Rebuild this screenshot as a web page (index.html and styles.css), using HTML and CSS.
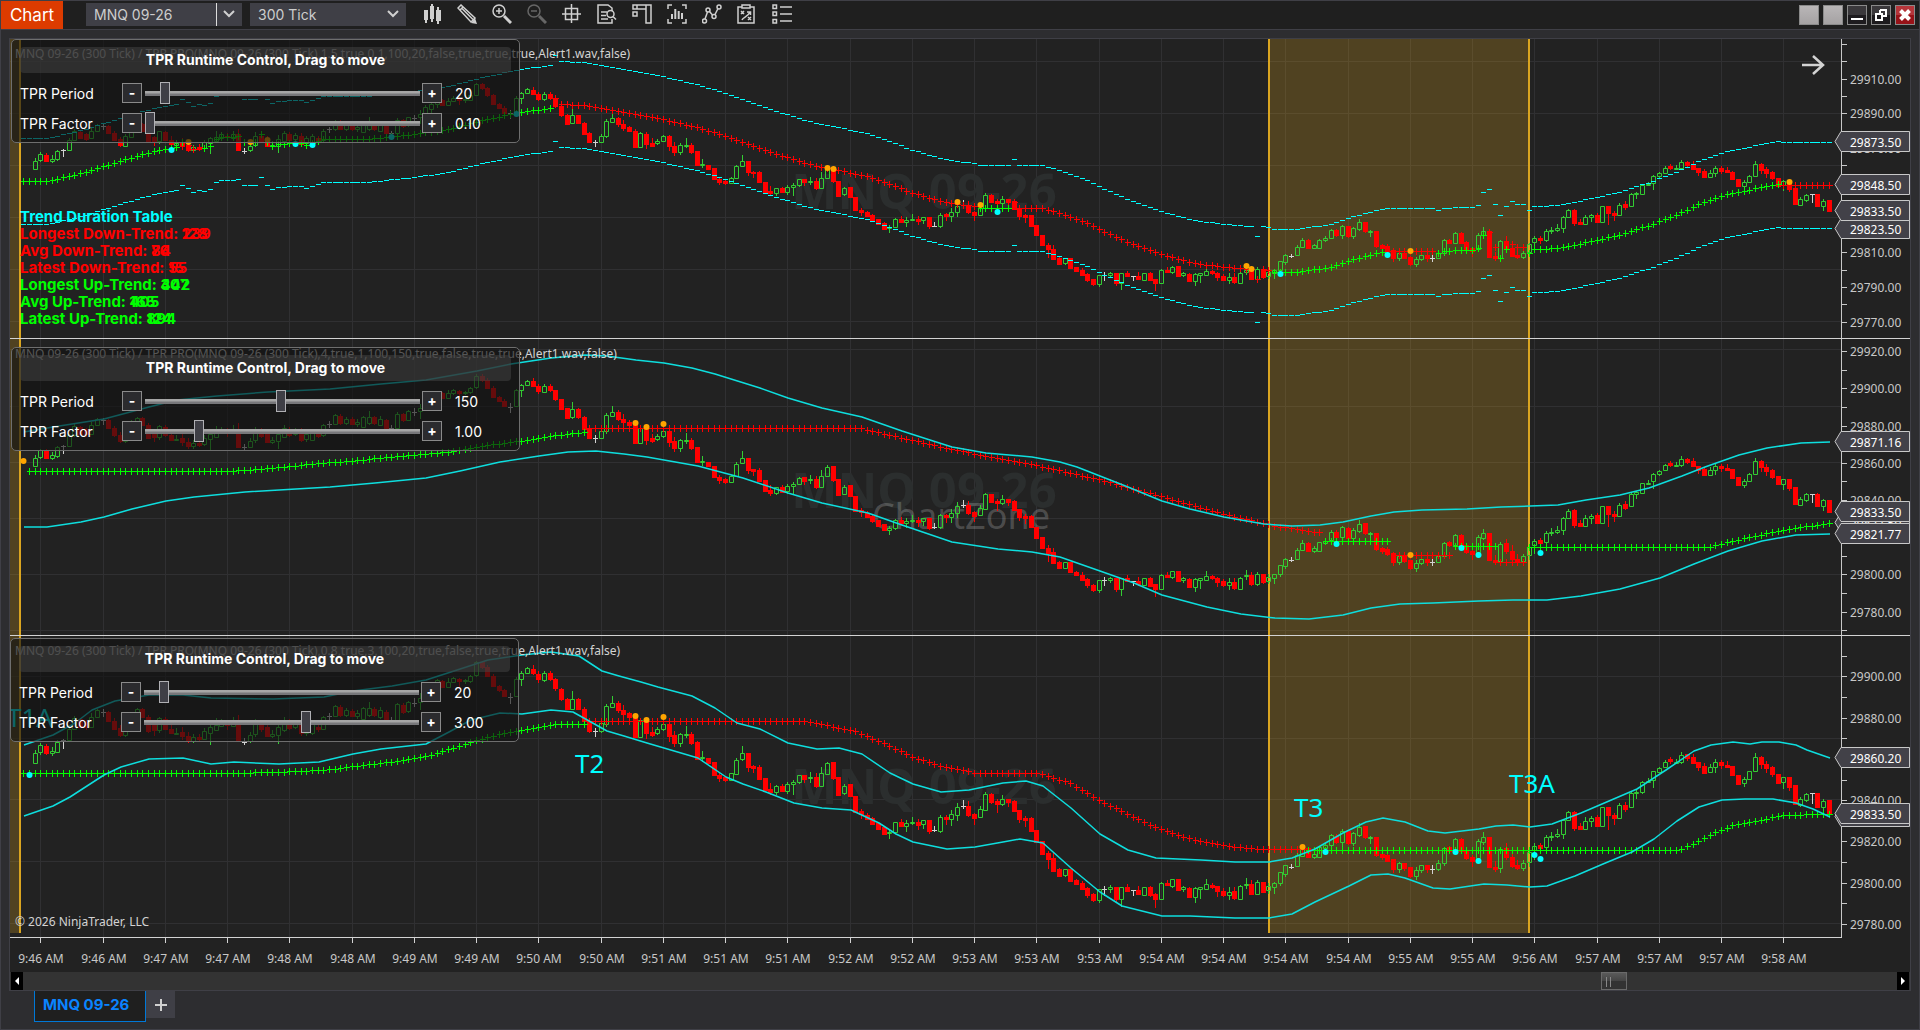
FILE: index.html
```html
<!DOCTYPE html>
<html lang="en">
<head>
    <meta charset="UTF-8">
    <meta name="viewport" content="width=device-width, initial-scale=1.0">
    <title>Chart - MNQ 09-26</title>
    <link rel="stylesheet" href="styles.css">
</head>
<body>

    <header class="titlebar">
        <h1 class="badge">Chart</h1>
        <div class="picker split">
            <select aria-label="Instrument"><option>MNQ 09-26</option></select>
            <svg class="chevron" viewBox="0 0 12 8"><path d="M1 1l5 5 5-5"/></svg>
        </div>
        <div class="picker">
            <select aria-label="Interval"><option>300 Tick</option></select>
            <svg class="chevron" viewBox="0 0 12 8"><path d="M1 1l5 5 5-5"/></svg>
        </div>
        <nav class="tools">
            <button aria-label="Chart style"><svg viewBox="0 0 20 20"><path class="solid" d="M2 6h4v10h-1v3h-2v-3H2zM8 2h1V0h2v2h1v13h-1v3h-2v-3H8zM14 6h1V3h2v3h2v11h-2v3h-2v-3h-1z"/></svg></button>
            <button aria-label="Drawing tools"><svg viewBox="0 0 20 20"><path class="solid" d="M14 19l6 1-2-6z"/><path d="M1 4l3-3 14 13-4 4zM3 6l3-3M5 4.500l11 11"/></svg></button>
            <button aria-label="Zoom in"><svg viewBox="0 0 20 20"><circle cx="7" cy="7" r="6"/><path d="M4 7h6M7 4v6"/><path class="thick" d="M12 12l7 7"/></svg></button>
            <button aria-label="Zoom out" disabled><svg viewBox="0 0 20 20"><circle cx="7" cy="7" r="6"/><path d="M4 7h6"/><path class="thick" d="M12 12l7 7"/></svg></button>
            <button aria-label="Crosshair"><svg viewBox="0 0 20 20"><path d="M3.500 4.500h12v11h-12zM9.500 0v19M0 10h19"/></svg></button>
            <button aria-label="Data box"><svg viewBox="0 0 20 20"><path d="M15 7V4l-4-3H1v18h14v-4M4 8h6M4 11.500h5M4 15h7"/><circle cx="13.500" cy="10" r="3.500"/><path d="M16 12.500l3 3"/></svg></button>
            <button aria-label="Chart trader"><svg viewBox="0 0 20 20"><path d="M1 1h4v4H1zM1 8h4v4H1zM5 1h14v18h-5V5H5M14 5V1"/></svg></button>
            <button aria-label="Indicators"><svg viewBox="0 0 20 20"><path d="M5 1H1v4M15 1h4v4M1 15v4h4M19 15v4h-4"/><path class="bars" d="M5 10v5M8.300 5v10M11.700 7v8M15 9v6"/></svg></button>
            <button aria-label="Strategies"><svg viewBox="0 0 20 20"><circle cx="2.500" cy="17" r="2"/><circle cx="6" cy="6" r="2"/><circle cx="12" cy="12.500" r="2"/><circle cx="17" cy="3" r="2"/><path d="M3 15l2.500-7M7.500 7.500l3 3.500M13 10.500l3-6"/></svg></button>
            <button aria-label="Strategy analyzer"><svg viewBox="0 0 20 20"><path d="M5 3H1v16h16V3h-4M5 1h8v3H5zM4 7l3 3M7 7l-3 3M11 13l3 3M14 13l-3 3M5 16c1-3 6-3 8-8M10 8h3.500v3"/></svg></button>
            <button aria-label="Properties"><svg viewBox="0 0 20 20"><path d="M1 1h3.500v3.500H1zM1 8h3.500v3.500H1zM1 15.500h3.500V19H1zM8 3h12M8 10h12M8 17h12"/></svg></button>
        </nav>
        <div class="window-buttons">
            <button class="blank" aria-label="Link instrument"></button>
            <button class="blank" aria-label="Link interval"></button>
            <button aria-label="Minimize"><svg viewBox="0 0 18 18"><path d="M3 13h12"/></svg></button>
            <button aria-label="Restore"><svg viewBox="0 0 18 18"><path d="M8 4h6v6h-3M4 8h6v6H4zM8 4v4"/></svg></button>
            <button class="close" aria-label="Close"><svg viewBox="0 0 18 18"><path class="cross" d="M4.500 4.500l9 9M13.500 4.500l-9 9"/></svg></button>
        </div>
    </header>

    <main class="chart">
        <section class="pane pane-a" id="paneA">
            <svg class="plot"></svg>
            <p class="indicator">MNQ 09-26 (300 Tick) / TPR PRO(MNQ 09-26 (300 Tick),1.5,true,0.1,100,20,false,true,true,true,Alert1.wav,false)</p>
            <div class="durations">
                <p class="head">Trend Duration Table</p>
                <p class="down">Longest Down-Trend: <span class="stack"><span>239</span><span>128</span></span></p>
                <p class="down">Avg Down-Trend: <span class="stack"><span>76</span><span>84</span></span></p>
                <p class="down">Latest Down-Trend: <span class="stack"><span>55</span><span>15</span></span></p>
                <p class="up">Longest Up-Trend: <span class="stack"><span>442</span><span>307</span></span></p>
                <p class="up">Avg Up-Trend: <span class="stack"><span>405</span><span>165</span></span></p>
                <p class="up">Latest Up-Trend: <span class="stack"><span>124</span><span>894</span></span></p>
            </div>
            <div class="control">
                <h2>TPR Runtime Control, Drag to move</h2>
                <div class="row">
                    <label for="periodA">TPR Period</label>
                    <button>-</button><input type="range" id="periodA" min="3" max="300" value="20"><button>+</button>
                    <output for="periodA">20</output>
                </div>
                <div class="row">
                    <label for="factorA">TPR Factor</label>
                    <button>-</button><input type="range" id="factorA" min="0.1" max="5" step="0.1" value="0.1"><button>+</button>
                    <output for="factorA">0.10</output>
                </div>
            </div>
        </section>

        <section class="pane pane-b" id="paneB">
            <svg class="plot"></svg>
            <p class="indicator">MNQ 09-26 (300 Tick) / TPR PRO(MNQ 09-26 (300 Tick),4,true,1,100,150,true,false,true,true,Alert1.wav,false)</p>
            <div class="control">
                <h2>TPR Runtime Control, Drag to move</h2>
                <div class="row">
                    <label for="periodB">TPR Period</label>
                    <button>-</button><input type="range" id="periodB" min="3" max="300" value="150"><button>+</button>
                    <output for="periodB">150</output>
                </div>
                <div class="row">
                    <label for="factorB">TPR Factor</label>
                    <button>-</button><input type="range" id="factorB" min="0.1" max="5" step="0.1" value="1"><button>+</button>
                    <output for="factorB">1.00</output>
                </div>
            </div>
        </section>

        <section class="pane pane-c" id="paneC">
            <svg class="plot"></svg>
            <p class="indicator">MNQ 09-26 (300 Tick) / TPR PRO(MNQ 09-26 (300 Tick),0.8,true,3,100,20,true,false,true,true,Alert1.wav,false)</p>
            <p class="copyright">© 2026 NinjaTrader, LLC</p>
            <div class="control">
                <h2>TPR Runtime Control, Drag to move</h2>
                <div class="row">
                    <label for="periodC">TPR Period</label>
                    <button>-</button><input type="range" id="periodC" min="3" max="300" value="20"><button>+</button>
                    <output for="periodC">20</output>
                </div>
                <div class="row">
                    <label for="factorC">TPR Factor</label>
                    <button>-</button><input type="range" id="factorC" min="0.1" max="5" step="0.1" value="3"><button>+</button>
                    <output for="factorC">3.00</output>
                </div>
            </div>
        </section>

        <svg class="times" id="times"></svg>

        <div class="scroll">
            <button aria-label="Scroll left"><svg viewBox="0 0 12 16"><path d="M8 4v8L4 8z"/></svg></button>
            <input type="range" aria-label="Chart position" min="0" max="1000" value="854">
            <button aria-label="Scroll right"><svg viewBox="0 0 12 16"><path d="M4 4v8l4-4z"/></svg></button>
        </div>
    </main>

    <footer class="tabs">
        <button class="tab">MNQ 09-26</button>
        <button class="add" aria-label="Add tab"><svg viewBox="0 0 12 12"><path d="M6 0v12M0 6h12"/></svg></button>
    </footer>

    <script src="script.js"></script>
</body>
</html>
```
FILE: styles.css
```css
* {
    box-sizing: border-box;
}
body {
    margin: 0;
    height: 100vh;
    display: flex;
    flex-direction: column;
    overflow: hidden;
    background: #2d2d30;
    border: 1px solid #3f3f46;
    font-family: Inter, "Noto Sans", sans-serif;
    font-size: 14px;
    color: #fff;
}
button, select, input {
    font: inherit;
    color: inherit;
    margin: 0;
    padding: 0;
}
h1, h2, p {
    margin: 0;
}
svg {
    display: block;
    fill: none;
    stroke: #d0d0d0;
}

/* title bar */
.titlebar {
    display: flex;
    align-items: center;
    height: 29px;
    flex: none;
    background: #1f1f1f;
    border-bottom: 1px solid #3f3f46;
    padding-right: 4px;
}
.badge {
    align-self: stretch;
    width: 62px;
    margin-right: 23px;
    background: #dd3b00;
    font-size: 17px;
    line-height: 28px;
    font-weight: 400;
    text-align: center;
}
.picker {
    display: grid;
    width: 156px;
    height: 23px;
    margin: 0 8px 2px 0;
    background: #3f3f46;
}
.picker select {
    grid-area: 1 / 1;
    appearance: none;
    border: 0;
    background: none;
    color: #cdcdcd;
    font-size: 14px;
    padding-left: 8px;
}
.chevron {
    grid-area: 1 / 1;
    justify-self: end;
    align-self: center;
    width: 12px;
    height: 8px;
    margin-right: 7px;
    stroke-width: 2;
    pointer-events: none;
}
.split select {
    border-right: 1px solid #ddd;
    margin-right: 25px;
}
.tools {
    display: flex;
    gap: 15px;
    margin: 0 0 2px 8px;
}
.tools button {
    width: 20px;
    height: 20px;
    border: 0;
    background: none;
}
.tools svg {
    width: 20px;
    height: 20px;
    stroke-width: 1.5;
}
.tools .solid {
    fill: #d0d0d0;
    stroke: none;
}
.tools .thick {
    stroke-width: 3;
}
.tools .bars {
    stroke-width: 2;
}
.tools button:disabled {
    opacity: 0.4;
}
.window-buttons {
    display: flex;
    gap: 4px;
    margin-left: auto;
}
.window-buttons button {
    width: 20px;
    height: 20px;
    border: 1px solid #8a8a8a;
    background: linear-gradient(#3a383b 50%, #1d1b1e 50%);
}
.window-buttons svg {
    width: 18px;
    height: 18px;
    stroke: #fff;
    stroke-width: 2;
}
.window-buttons .blank {
    background: linear-gradient(#b9b6b7, #a5a2a3);
}
.window-buttons .close {
    background: linear-gradient(#b5353a 50%, #981218 50%);
}
.window-buttons .cross {
    stroke-width: 4;
}

/* chart */
.chart {
    flex: 1;
    min-height: 0;
    display: grid;
    grid-template-rows: 300fr 297fr 301fr 35px 18px;
    margin: 8px 8px 0;
    border: 1px solid #3f3f46;
    background: #222;
}
.pane {
    position: relative;
    min-height: 0;
    border-bottom: 1px solid #d3d3d3;
    overflow: hidden;
}
.pane-c {
    border-bottom: 0;
}
.plot {
    position: absolute;
    width: 100%;
    height: 100%;
}
.plot text, .times text {
    font: 12px "Noto Sans", sans-serif;
    fill: #c8c8c8;
    stroke: none;
}
.plot .mark {
    fill: #fff;
}
.plot .watermark {
    font-size: 49px;
    font-weight: 700;
    fill: #2b2e2e;
    text-anchor: middle;
}
.plot .zone {
    font-size: 36px;
    fill: rgba(255, 255, 255, 0.2);
    text-anchor: middle;
}
.plot .note {
    font-size: 26px;
    fill: #00ffff;
}
.indicator, .copyright {
    position: absolute;
    left: 5px;
    font: 12px/16px "Noto Sans", sans-serif;
    color: #d3d3d3;
    white-space: nowrap;
}
.indicator {
    top: 7px;
}
.copyright {
    bottom: 7px;
}
.durations {
    position: absolute;
    left: 10px;
    top: 169px;
    font-size: 15px;
    line-height: 17px;
    font-weight: 700;
}
.head {
    color: #00ffff;
}
.down {
    color: #f00;
}
.up {
    color: #0f0;
}
.stack {
    display: inline-grid;
}
.stack span {
    grid-area: 1 / 1;
}

/* draggable slider box */
.control {
    position: absolute;
    left: 1px;
    top: 0;
    width: 509px;
    height: 104px;
    padding: 7px 8px;
    border: 1px solid #6e6e6e;
    border-radius: 5px;
    background: rgba(18, 18, 18, 0.65);
}
.pane-b .control {
    top: 8px;
}
.pane-c .control {
    left: 0;
    top: 2px;
}
.control h2 {
    height: 26px;
    margin-bottom: 5px;
    border-radius: 4px;
    background: rgba(70, 70, 70, 0.5);
    font-size: 14px;
    line-height: 26px;
    font-weight: 700;
    text-align: center;
}
.row {
    display: flex;
    align-items: center;
    height: 30px;
}
.row label {
    width: 102px;
}
.row button {
    width: 20px;
    height: 20px;
    border: 1px solid #8a8a8a;
    background: #2b2b2e;
    font-weight: 700;
    line-height: 18px;
}
.row input {
    appearance: none;
    width: 275px;
    height: 22px;
    margin: 0 2px 0 3px;
    background: linear-gradient(#a6a6a6 40%, #77777a 60%) center / 100% 5px no-repeat;
}
.row input::-webkit-slider-thumb {
    appearance: none;
    width: 10px;
    height: 22px;
    border: 1px solid #b0b0b4;
    background: #3f3f46;
}
.row output {
    margin-left: 13px;
}

/* bottom */
.times {
    width: 100%;
    height: 35px;
}
.scroll {
    display: flex;
    padding: 0 1px;
    background: #333;
}
.scroll button {
    width: 12px;
    border: 0;
    background: #000;
}
.scroll button svg {
    fill: #fff;
    stroke: none;
}
.scroll input {
    appearance: none;
    flex: 1;
    background: none;
}
.scroll input::-webkit-slider-thumb {
    appearance: none;
    width: 26px;
    height: 18px;
    border: 1px solid #6a6a6a;
    background:
        linear-gradient(#888, #888) 4px 4px / 1px 10px no-repeat,
        linear-gradient(#888, #888) 8px 4px / 1px 10px no-repeat,
        linear-gradient(#5a5a5a, #444 50%, #333 50%);
}
.tabs {
    display: flex;
    align-items: flex-start;
    height: 38px;
    flex: none;
    padding-left: 33px;
}
.tab {
    width: 112px;
    height: 31px;
    padding: 0 0 4px 8px;
    border: 1px solid #0078d7;
    border-top: 0;
    background: #1f1f1f;
    color: #0a84ff;
    font-size: 15px;
    font-weight: 700;
    text-align: left;
}
.add {
    display: grid;
    place-items: center;
    width: 29px;
    height: 27px;
    border: 0;
    background: #3f3f46;
}
.add svg {
    width: 12px;
    height: 12px;
    stroke-width: 2;
}
```
FILE: script.js
```javascript
const NS = 'http://www.w3.org/2000/svg';
const AXIS = 69;
const STEP = 5.659;
const FIRST = 13.4;
const PLOT = 1831;

// open, high, low, close of each bar, as a level below 29922.45 (one level = 0.1615 points)
const bars = `398 360 402 370|367 340 375 346|348 342 376 370|370 350 377 362|365 330 370 335|331 327 357 331|331 290 335 296|296 258 300 265
268 265 292 290|275 270 300 292|290 250 292 262|262 238 265 241|246 238 260 246|246 242 275 272|272 265 300 296|293 285 320 314
316 275 320 280|285 245 290 250|262 235 265 238|238 235 265 262|262 255 308 304|285 280 318 300|300 262 310 265|268 262 300 296
296 280 312 310|312 295 316 308|305 290 330 318|318 305 340 332|332 312 340 322|320 312 335 328|326 295 330 304|308 285 345 290
300 265 304 285|288 268 292 276|280 270 300 285|288 262 292 274|276 255 335 333|336 325 345 336|333 305 338 316|312 268 320 280
282 272 305 298|290 282 320 318|318 300 325 312|316 278 342 292|300 262 305 272|275 268 300 294|292 270 298 278|280 272 318 310
308 280 318 290|310 275 315 282|290 283 305 298|296 258 300 262|258 248 270 258|258 225 262 229|230 226 260 255|255 235 262 240
242 236 262 258|258 240 268 250|268 232 270 235|255 215 262 235|236 230 262 256|262 232 266 240|245 240 275 270|272 262 278 272
272 218 278 223|224 220 252 245|244 212 248 215|218 205 230 218|215 190 240 204|206 170 210 178|186 165 200 168|168 148 180 150
154 150 175 170|170 145 175 155|155 140 160 145|148 144 170 153|153 148 162 151|152 135 158 137|136 92 140 97|97 92 118 112
112 106 142 137|137 132 172 168|168 164 186 180|180 176 200 198|200 188 222 200|198 140 202 146|146 124 168 128|128 110 132 115
116 105 134 130|132 124 158 148|150 124 156 130|130 124 152 146|146 144 182 175|176 174 212 208|206 204 240 237|236 184 240 207
207 205 240 236|236 230 278 274|272 268 308 304|303 295 322 303|304 274 308 280|282 222 290 228|230 198 234 218|218 212 248 240
240 225 265 252|250 246 262 262|262 258 322 322|320 268 322 270|273 268 328 310|306 290 322 316|308 292 314 298|298 278 304 282
282 278 336 318|316 302 352 338|338 308 350 312|314 288 324 312|312 306 346 338|336 334 388 386|385 363 396 382|384 384 402 398
396 396 438 434|434 428 456 444|442 438 456 450|450 428 452 430|432 384 432 390|388 348 392 370|370 370 425 410|409 406 430 413
411 405 448 446|444 444 482 480|477 460 496 486|486 466 494 468|468 462 486 483|482 456 492 463|463 450 495 457|457 434 462 436
435 434 460 446|445 426 458 442|441 430 474 468|467 410 470 430|432 395 434 400|396 396 450 443|441 441 495 495|490 462 494 467
462 462 502 498|498 498 550 546|544 538 566 552|554 548 570 566|563 560 586 582|578 576 598 596|592 590 612 612|610 598 626 605
605 575 610 577|577 566 590 588|587 570 605 580|580 560 586 576|576 568 600 584|582 570 596 571|570 570 612 603|601 588 606 601
602 556 608 562|561 556 586 567|568 540 588 553|554 518 572 530|528 510 538 528|528 514 560 554|552 548 584 563|562 528 564 538
540 486 542 492|492 490 522 516|514 506 548 522|521 495 528 508|508 506 530 516|514 510 545 543|541 540 580 567|564 558 592 570
564 562 602 602|600 600 638 636|634 634 672 672|670 662 716 686|684 670 724 722|718 714 738 737|736 716 740 718|718 718 752 752
750 748 764 762|760 752 778 776|774 770 804 795|793 790 816 810|809 776 820 778|778 768 798 778|778 766 788 772|772 770 816 807
806 770 830 772|770 762 784 782|780 780 798 780|780 768 796 792|794 770 798 772|772 768 800 796|792 790 833 807|806 756 808 760
760 750 764 766|767 746 774 748|747 747 782 780|776 768 786 772|774 772 800 800|800 772 818 774|778 770 806 772|776 747 778 763
764 760 778 770|769 768 800 783|782 775 800 795|795 770 810 785|783 770 810 804|806 766 808 769|765 744 776 761|761 750 796 791
791 750 796 757|757 756 790 785|780 758 792 767|770 756 792 758|758 726 768 727|731 704 740 706|710 702 716 710|707 670 710 676
677 645 680 654|654 650 684 680|681 665 686 672|680 650 684 652|653 640 660 646|645 612 650 616|618 612 642 635|635 598 650 602
604 602 646 638|638 605 648 610|614 578 620 590|588 588 626 622|623 618 642 620|622 620 680 675|672 668 690 680|675 668 696 692
688 688 730 718|718 696 728 698|698 698 722 715|712 710 745 738|737 712 750 720|721 704 728 706|706 704 730 716|716 704 732 716
716 690 722 698|698 650 708 654|652 648 668 662|662 624 668 628|627 624 668 664|660 656 690 683|680 676 712 692|683 626 690 634
636 606 645 622|622 620 714 712|710 694 726 716|715 652 728 656|655 640 690 680|680 660 714 708|706 690 720 713|713 690 722 698
695 664 712 667|660 640 690 647|645 638 668 653|652 615 658 622|621 605 632 617|618 596 624 611|611 566 626 571|571 542 572 547
545 542 604 593|587 578 598 597|597 562 600 572|572 558 590 563|562 555 590 587|587 530 590 532|532 530 600 556|556 548 584 563
563 520 565 526|525 515 545 536|532 484 534 490|490 480 507 485|487 453 492 455|457 444 460 454|449 422 474 424|425 410 430 413
412 390 414 395|388 380 402 394|398 386 402 395|395 366 402 374|373 372 392 384|381 372 400 398|397 396 424 410|408 400 432 428
427 402 430 412|412 388 428 397|397 390 418 405|404 392 415 410|409 408 438 436|435 434 462 461|460 440 472 446|446 422 450 424
424 370 426 381|381 378 418 402|401 392 430 413|410 408 440 433|432 432 462 459|456 440 476 442|442 442 482 470|466 466 526 523
526 500 530 506|510 488 516 491|490 490 522 490|490 488 532 530|531 506 548 512|511 510 552 550`
    .split(/[|\n]/).map(b => b.trim().split(' ').map(v => 29900 - (v - 139) * 0.1615));

// Indicator series are "bar:level" pairs, a level being a third of a pixel.
// A leading g or r starts a new run in that colour.
const panes = [
    {
        id: 'paneA', height: 299, offset: 9, ref: 29910, refY: 39.7, scale: 1.7357,
        grid: [22, 74, 126, 178, 230, 282], ticks: [29770, 29930], labels: [29770, 29910],
        mid: `g 0:454 3:454 5:449 9:435 11:425 14:409 17:393 21:373 24:360 27:352 28:336
            r 29:345 30:358 31:350 g 32:354 33:348 34:327 35:321 38:319 39:336 41:337 42:312 43:336 44:348 45:342 46:342 47:339 49:339 50:345 51:339 52:332 53:327 60:327 64:321 69:312 75:298 80:275 84:260 88:245 92:237 93:234
            r 94:204 95:222 99:225 103:236 109:256 113:268 119:292 123:312 127:337 131:360 135:382 139:403 145:424 149:438 153:462 157:488 162:513 164:520 168:527
            g 169:535 174:535 r 175:515 176:533 180:534 183:548 188:578 191:605 196:642 201:673 207:699 212:711 217:717 218:747 219:718 220:720
            g 221:727 224:727 227:721 231:710 236:683 240:666 r 241:662 249:662 g 250:668 251:664 253:660 256:660 257:655 258:614
            r 259:606 260:652 g 261:685 262:657 r 263:642 264:652 265:652 g 266:668 267:657 269:656 272:651 277:634 282:614 287:587 292:555 296:523 301:493 306:475 310:463 r 311:466 319:466`,
        band: 25,
        dots: 'c26:360 c65:320 c87:252 c48:342 c51:346 o29:336 o40:336 o43:329 o142:413 o143:416 o165:516 o169:525 c172:546 o216:708 o217:717 c222:732 c241:675 o245:663 o312:456',
        marks: [29823.5, 29833.5, 29848.5, 29873.5],
        watermark: 170, notes: []
    },
    {
        id: 'paneB', height: 296, offset: 4, ref: 29860, refY: 123.7, scale: 1.86,
        grid: [10, 67, 123, 179, 235, 291], ticks: [29770, 29920], labels: [29780, 29920],
        mid: `g 1:409 36:409 44:398 54:382 58:377 67:362 75:350 82:330 88:317 93:303 99:291
            r 100:280 148:280 152:296 161:331 168:356 179:391 190:433 201:484 212:537 218:560 221:572 226:585 229:592
            g 230:619 241:619 r 242:659 252:659 g 253:634 260:634 r 261:682 265:682
            g 266:637 296:637 298:635 302:618 306:602 313:578 319:565`,
        upper: '0:290 5:276 14:252 22:215 27:195 34:183 43:172 54:163 63:148 71:135 80:108 86:87 93:68 99:60 103:62 108:74 113:83 118:100 122:117 130:158 135:190 141:218 148:245 155:287 160:315 164:335 170:353 178:366 183:381 186:395 190:423 195:455 201:497 206:522 212:546 215:555 219:567 224:573 229:569 233:560 238:542 242:530 247:525 255:522 261:517 266:514 271:510 276:496 282:481 287:458 293:422 297:395 303:360 308:338 314:323 319:321',
        lower: '0:576 4:575 10:562 14:545 19:523 25:497 30:486 39:470 48:462 54:456 62:443 71:429 77:408 84:380 91:362 96:350 101:348 106:357 110:365 119:392 127:430 135:475 141:505 149:535 155:570 164:620 172:642 178:650 183:667 190:707 196:745 201:780 209:815 215:836 221:850 227:852 233:839 238:819 243:808 249:804 257:799 263:795 269:794 275:783 282:763 289:730 295:687 301:647 307:618 313:601 319:596',
        dots: 'o0:378 o108:264 o110:276 o113:267 c232:627 c254:639 c257:660 c268:654 o245:660',
        marks: [29827.5, 29833.5, 29821.77, 29871.16],
        watermark: 169, zone: 190, notes: []
    },
    {
        id: 'paneC', height: 301, offset: 6, ref: 29900, refY: 40.3, scale: 2.064,
        grid: [40, 102, 163, 225, 287], ticks: [29780, 29910], labels: [29780, 29900],
        mid: `g 0:430 36:430 43:426 49:423 54:418 60:405 66:393 71:379 76:353 81:326 85:308 88:299 94:283 99:283
            r 100:274 138:274 142:286 147:304 152:340 157:380 162:408 166:420 168:428 179:430 180:432 185:460 190:510 195:552 200:592 206:625 212:646 216:654 219:658 226:658
            g 227:661 291:661 293:658 296:632 299:607 302:586 306:572 311:556 315:553 319:553`,
        upper: '0:345 5:315 9:280 12:240 16:214 22:195 28:195 33:205 44:206 53:200 58:183 65:168 71:150 76:123 82:90 88:74 93:67 98:78 102:123 105:138 109:155 112:171 118:197 122:235 126:278 130:297 135:338 140:356 144:353 148:372 153:430 157:463 162:486 167:480 173:458 177:453 180:467 185:535 190:612 195:660 200:685 208:690 214:695 220:695 224:685 228:657 233:608 237:575 240:564 244:575 248:602 251:608 257:598 260:588 263:586 266:591 270:583 275:548 280:513 285:478 290:420 295:363 298:346 302:335 305:341 307:336 310:336 313:345 315:360 319:385',
        lower: '0:557 5:527 8:500 11:468 14:434 17:410 22:386 28:384 33:402 37:397 45:402 52:396 58:372 63:358 71:341 75:305 79:270 84:248 88:251 93:240 97:246 103:302 106:318 110:340 113:355 119:385 124:440 127:463 131:485 136:520 141:533 146:540 151:578 154:612 157:635 163:657 168:652 173:635 176:627 180:640 185:713 190:785 194:827 201:858 206:859 214:863 220:863 224:852 228:817 234:767 238:735 241:733 244:745 249:773 252:777 258:763 262:766 266:771 269:768 274:737 279:702 284:667 288:628 292:573 296:532 300:510 304:508 309:507 313:518 316:537 319:561',
        dots: 'c1:435 o108:258 o110:270 o113:261 o226:651 c230:666 c253:666 c257:693 c267:675 c268:687',
        marks: [29832, 29833.5, 29860.2],
        watermark: 168,
        notes: [['T1A', -3, 91], ['T2', 565, 137], ['T3', 1284, 181], ['T3A', 1499, 157]]
    }
];

const times = ['9:46', '9:46', '9:47', '9:47', '9:48', '9:48', '9:49', '9:49', '9:50', '9:50', '9:51', '9:51', '9:51', '9:52', '9:52',
    '9:53', '9:53', '9:53', '9:54', '9:54', '9:54', '9:54', '9:55', '9:55', '9:56', '9:57', '9:57', '9:57', '9:58'];

function add(svg, tag, attrs, text) {
    const el = document.createElementNS(NS, tag);
    for (const key in attrs) el.setAttribute(key, attrs[key]);
    if (text) el.textContent = text;
    svg.appendChild(el);
    return el;
}

// fill in the bars between the given points of one run
function expand(run) {
    const pts = run.trim().split(/\s+/).map(p => p.split(':').map(Number));
    const out = [];
    pts.forEach(([i, v], n) => {
        out.push([i, v]);
        const next = pts[n + 1];
        if (!next) return;
        for (let k = i + 1; k < next[0]; k++) {
            out.push([k, v + (next[1] - v) * (k - i) / (next[0] - i)]);
        }
    });
    return out;
}

function drawPane(p) {
    const svg = document.querySelector('#' + p.id + ' .plot');
    const width = svg.clientWidth - AXIS;
    const height = svg.clientHeight;
    const kx = width / PLOT;
    const ky = height / p.height;
    const x = i => Math.round((FIRST + STEP * i) * kx);
    const level = v => Math.round((v / 3 - p.offset) * ky);
    const price = v => Math.round((p.refY + (p.ref - v) * p.scale) * ky);
    svg.innerHTML = '';

    let d = '';
    for (let i = 3; i < 320; i += 11) d += `M${x(i) + 0.5} 0V${height}`;
    p.grid.forEach(y => d += `M0 ${Math.round(y * ky) + 0.5}H${width}`);
    add(svg, 'path', { d, stroke: '#303032' });

    // session highlights
    const bandEnd = p.id === 'paneC' ? height - 4 : height;
    [[0, 10], [1259, 1519]].forEach(([a, b]) => {
        add(svg, 'rect', { x: a * kx, y: 0, width: (b - a) * kx, height: bandEnd, fill: '#daa520', 'fill-opacity': 0.25, stroke: 'none' });
    });
    add(svg, 'path', { d: `M10 0V${bandEnd}M${1259 * kx} 0V${bandEnd}M${1519 * kx} 0V${bandEnd}`, stroke: '#daa520', 'stroke-width': 2, 'shape-rendering': 'crispEdges' });

    add(svg, 'text', { class: 'watermark', x: 914 * kx, y: p.watermark * ky }, 'MNQ 09-26');
    if (p.zone) add(svg, 'text', { class: 'zone', x: 951 * kx, y: p.zone * ky }, 'ChartZone');

    // candles
    const up = { d: '', stroke: '#32cd32' };
    const down = { d: '', fill: '#f00', stroke: 'none' };
    const flat = { d: '', stroke: '#d3d3d3' };
    bars.forEach(([o, h, l, c], n) => {
        const cx = x(n + 2);
        const [yo, yh, yl, yc] = [o, h, l, c].map(price);
        if (o === c) {
            flat.d += `M${cx + 0.5} ${yh}V${yl}M${cx - 2} ${yo + 0.5}h5`;
        } else if (c > o) {
            up.d += `M${cx + 0.5} ${yh}V${yc}M${cx + 0.5} ${yo}V${yl}M${cx - 1.5} ${yc + 0.5}h4V${Math.max(yo, yc + 1) + 0.5}h-4z`;
        } else {
            down.d += `M${cx - 2} ${yo}h5V${Math.max(yc, yo + 1) + 1}h-5zM${cx} ${yh}h1V${yl}h-1z`;
        }
    });
    [up, down, flat].forEach(a => add(svg, 'path', a));

    // trend line with a cross on each bar, and the two bands
    const runs = p.mid.match(/[gr][^gr]+/g);
    let dashes = '';
    runs.forEach(run => {
        let d = '';
        expand(run.slice(1)).forEach(([i, v]) => {
            const y = level(v);
            d += `M${x(i) - 2} ${y + 0.5}h6M${x(i) + 0.5} ${y - 3}v7`;
            if (p.band) {
                const gap = Math.round(p.band * p.scale * ky);
                dashes += `M${x(i) - 2} ${y - gap + 0.5}h5M${x(i) - 2} ${y + gap + 0.5}h5`;
            }
        });
        add(svg, 'path', { d, stroke: run[0] === 'g' ? '#0f0' : '#f00' });
    });
    if (dashes) add(svg, 'path', { d: dashes, stroke: '#00ffff' });
    [p.upper, p.lower].filter(Boolean).forEach(line => {
        const points = line.split(' ').map(s => s.split(':')).map(([i, v]) => `${x(+i) + 1},${level(+v)}`).join(' ');
        add(svg, 'polyline', { points, stroke: '#0edede', 'stroke-width': 1.5, 'stroke-linejoin': 'round' });
    });

    p.dots.split(' ').forEach(s => {
        const [i, v] = s.slice(1).split(':').map(Number);
        add(svg, 'circle', { cx: x(i) + 0.5, cy: level(v), r: 3, fill: s[0] === 'o' ? '#ffa500' : '#00ffff', stroke: 'none' });
    });
    p.notes.forEach(([text, nx, ny]) => add(svg, 'text', { class: 'note', x: nx * kx, y: ny * ky }, text));

    if (p.id === 'paneA') {
        add(svg, 'path', { d: `M${width - 39} 26h21M${width - 28} 17l10 9l-10 9`, stroke: '#d3d3d3', 'stroke-width': 2.5 });
    }

    // price axis
    d = `M${width + 0.5} 0V${height}`;
    for (let v = p.ticks[0]; v <= p.ticks[1]; v += 10) d += `M${width} ${price(v) + 0.5}h6`;
    add(svg, 'path', { d, stroke: '#c8c8c8' });
    for (let v = p.labels[0]; v <= p.labels[1]; v += 20) {
        add(svg, 'text', { x: width + 9, y: price(v) + 5 }, v.toFixed(2));
    }
    p.marks.forEach(v => {
        const y = price(v) - 0.5;
        add(svg, 'path', { d: `M${width - 6} ${y}l6-10h68.500v20H${width}z`, fill: '#424148', stroke: '#c8c8c8' });
        add(svg, 'text', { class: 'mark', x: width + 9, y: y + 5 }, v.toFixed(2));
    });
}

function drawTimes() {
    const svg = document.getElementById('times');
    const width = svg.clientWidth - AXIS;
    svg.innerHTML = '';
    let d = `M0 0.500H${width + 1}`;
    times.forEach((t, n) => {
        const x = Math.round((FIRST + STEP * (3 + n * 11)) * width / PLOT);
        d += `M${x + 0.5} 0v6`;
        add(svg, 'text', { x: x + 1, y: 26, 'text-anchor': 'middle' }, t + ' AM');
    });
    add(svg, 'path', { d, stroke: '#d3d3d3' });
}

function draw() {
    panes.forEach(drawPane);
    drawTimes();
}

draw();
window.addEventListener('resize', draw);
```
